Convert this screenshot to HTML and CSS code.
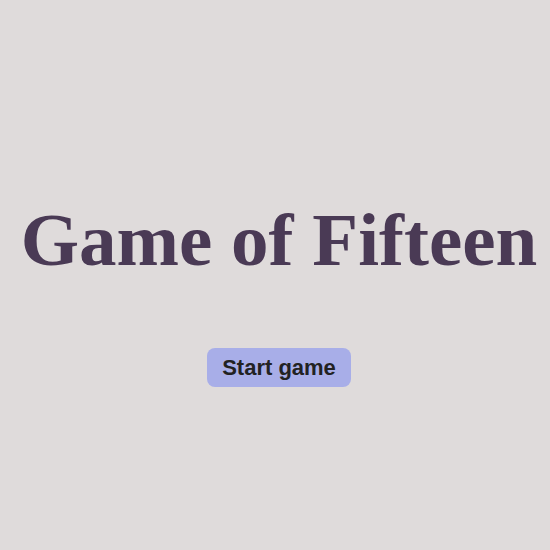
FILE: index.html
```html
<!DOCTYPE html>
<html>
<head>
<meta charset="utf-8">
<link rel="stylesheet" href="styles.css">
</head>
<body>
<main class="screen">
  <h1 class="title">Game of Fifteen</h1>
  <button class="start">Start game</button>
</main>
</body>
</html>
```
FILE: styles.css
```css
html, body {
  margin: 0;
  padding: 0;
  background: #dfdbdb;
}
.screen {
  height: 550px;
  display: flex;
  flex-direction: column;
  align-items: center;
  padding-top: 194px;
  padding-left: 8px;
  box-sizing: border-box;
}
.title {
  margin: 0;
  font-family: "Liberation Serif", serif;
  font-weight: bold;
  font-size: 75px;
  line-height: 92px;
  white-space: nowrap;
  color: #4a3a55;
}
.start {
  margin-top: 62px;
  width: 144px;
  height: 39px;
  border: none;
  border-radius: 8px;
  background: #a8aee8;
  color: #222222;
  font-family: "Liberation Sans", Arial, sans-serif;
  font-weight: bold;
  font-size: 22px;
  padding: 0;
}
```
